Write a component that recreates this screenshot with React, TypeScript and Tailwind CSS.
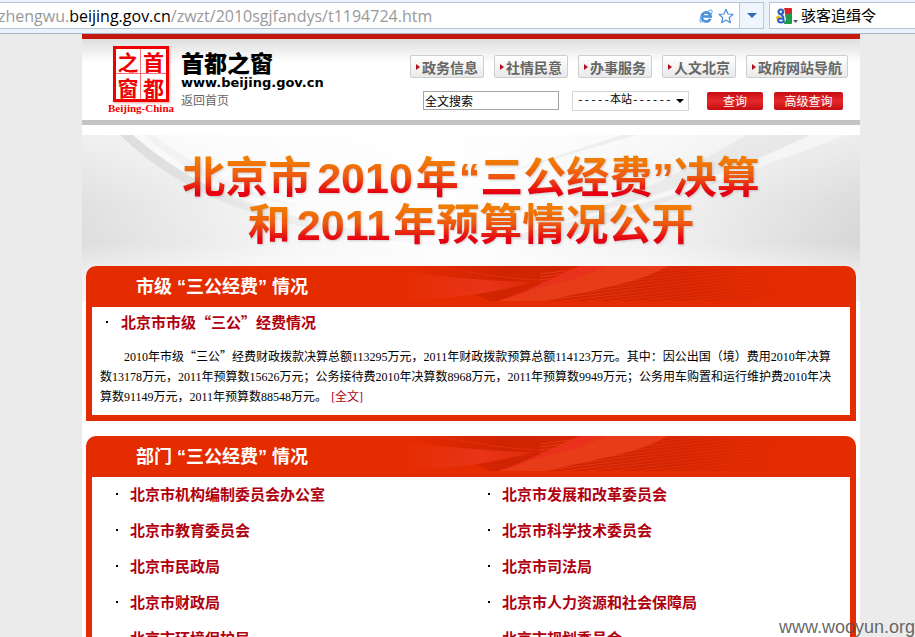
import React from "react";

const SANS = "font-['Liberation_Sans','Noto_Sans_CJK_SC',sans-serif]";
const CJK = "font-['Noto_Sans_CJK_SC',sans-serif]";
const BODY = "font-['Liberation_Serif','Noto_Sans_CJK_SC',serif]";

const navItems = ["政务信息", "社情民意", "办事服务", "人文北京", "政府网站导航"];

const departments = [
  "北京市机构编制委员会办公室",
  "北京市发展和改革委员会",
  "北京市教育委员会",
  "北京市科学技术委员会",
  "北京市民政局",
  "北京市司法局",
  "北京市财政局",
  "北京市人力资源和社会保障局",
  "北京市环境保护局",
  "北京市规划委员会",
];

function BrowserIcon() {
  return (
    <svg width="14" height="14" viewBox="0 0 16 16" fill="none" aria-hidden="true">
      <path d="M13 11.200A5.200 5.200 0 1 1 13.400 8.600H4.200" stroke="#4a8fdc" strokeWidth="3" />
      <path d="M10.400 2.200C13 .6 15.300.7 15 3.200c-.1 1-.7 2.100-1.300 3M3 8.500C.8 11.800.4 14.600 2.200 14.900c1 .1 2.400-.5 3.600-1.300" stroke="#6fabeb" strokeWidth="1.300" />
    </svg>
  );
}

function StarIcon() {
  return (
    <svg width="16" height="16" viewBox="0 0 16 16" aria-hidden="true">
      <path d="M8 1.300l2 4.700 5 .4-3.800 3.300 1.200 5L8 12l-4.400 2.700 1.200-5L1 6.400 6 6z" fill="#fff" stroke="#4a8fdc" strokeWidth="1.200" strokeLinejoin="round" />
    </svg>
  );
}

function SearchEngineIcon() {
  return (
    <svg width="16" height="16" viewBox="0 0 16 16" aria-hidden="true">
      <path d="M8 0h7a1 1 0 0 1 1 1v5L9 7z" fill="#d8232a" />
      <path d="M8 7l8-2v10a1 1 0 0 1-1 1H8z" fill="#1f9a48" />
      <path d="M1 0h7l1 7 1 5-3 4H2l-2-3 3-4-3-4z" fill="#fff" />
      <path d="M0 9l3-2 2 3-4 3z" fill="#f4b400" />
      <circle cx="4.800" cy="3.800" r="2.300" fill="#fff" stroke="#2a5fc4" strokeWidth="2.200" />
      <path d="M5 7c2.400 1.200 2.800 2 2.200 3.400" stroke="#2a5fc4" strokeWidth="2" fill="none" />
      <ellipse cx="5" cy="12.600" rx="2.800" ry="2" fill="#fff" stroke="#2a5fc4" strokeWidth="2" />
    </svg>
  );
}

function BrowserBar() {
  return (
    <div className="flex h-[34px] shrink-0 items-start border-b border-[#a9b4c0] bg-[#eaf2fb] pt-[2px]">
      <div className="flex h-[27px] min-w-0 flex-1 items-center border-y border-[#b6c4d3] bg-white">
        <div className="-ml-0.5 min-w-0 flex-1 overflow-hidden whitespace-nowrap font-['Open_Sans',sans-serif] text-[16px] leading-[24px] text-[#999]">
          zhengwu.<span className="text-black">beijing.gov.cn</span>/zwzt/2010sgjfandys/t1194724.htm
        </div>
        <button type="button" aria-label="兼容模式" className="mr-[5px]"><BrowserIcon /></button>
        <button type="button" aria-label="收藏" className="mr-[5px]"><StarIcon /></button>
        <button type="button" aria-label="展开" className="flex h-full w-[25px] items-center justify-center border-x border-[#b6cbe2] bg-[#eef5fc]">
          <svg width="10" height="5" viewBox="0 0 10 5" aria-hidden="true"><path d="M0 0h10L5 5z" fill="#2d6ab8" /></svg>
        </button>
      </div>
      <div className="ml-[5px] flex h-[27px] w-[146px] items-center border border-r-0 border-[#b6c4d3] bg-white pl-[6px]">
        <SearchEngineIcon />
        <svg className="ml-px mt-3" width="5" height="3" viewBox="0 0 5 3" aria-hidden="true"><path d="M0 0h5L2.500 3z" fill="#555" /></svg>
        <input aria-label="搜索" defaultValue="骇客追缉令" className={`ml-[3px] min-w-0 flex-1 bg-transparent text-[15px] text-black outline-none ${CJK}`} />
      </div>
    </div>
  );
}

function Seal() {
  return (
    <div className="flex w-[64px] shrink-0 flex-col items-center text-[#f00000]">
      <div className={`grid size-[56px] grid-cols-2 grid-rows-2 border-[3px] border-[#f00000] bg-white text-[21px] font-bold leading-[24px] shadow-[1px_1px_2px_#f0a0a0] ${CJK}`}>
        <span className="flex items-center justify-center border-b border-r border-[#f57070]">之</span>
        <span className="flex items-center justify-center border-b border-[#f57070]">首</span>
        <span className="flex items-center justify-center border-r border-[#f57070]">窗</span>
        <span className="flex items-center justify-center">都</span>
      </div>
      <span className="whitespace-nowrap font-['Liberation_Serif',serif] text-[11px] font-bold leading-[13px]">Beijing-China</span>
    </div>
  );
}

function SiteHeader() {
  return (
    <header className="flex h-[91px] items-start border-b-[5px] border-t-[5px] border-b-[#c4c4c4] border-t-[#c4180a] bg-[linear-gradient(#dedede,#fff_24px)] pl-[27px] pr-3">
      <div className="flex gap-2 pt-[7px]">
        <Seal />
        <div className="flex flex-col pt-1 text-black">
          <span className={`h-[26px] text-[23px] font-black leading-[24px] ${CJK}`}>首都之窗</span>
          <span className="font-['DejaVu_Sans',sans-serif] text-[13px] font-bold leading-[14px]">www.beijing.gov.cn</span>
          <a href="#home" className={`text-[12px] leading-[20px] text-[#666] ${CJK}`}>返回首页</a>
        </div>
      </div>
      <div className="ml-auto flex shrink-0 flex-col items-end pt-4">
        <nav className="flex gap-[10px]">
          {navItems.map((item) => (
            <a key={item} href="#nav" className={`flex h-[23px] items-center gap-[2px] whitespace-nowrap rounded-[2px] border border-[#cfcfcf] bg-[linear-gradient(#fff,#e9e9e9)] px-[5px] text-[14px] font-bold leading-[20px] text-[#666] ${CJK}`}>
              <svg width="4" height="6" viewBox="0 0 4 6" aria-hidden="true"><path d="M0 0l4 3-4 3z" fill="#b01020" /></svg>
              {item}
            </a>
          ))}
        </nav>
        <form className={`mr-[5px] mt-3 flex h-[21px] items-center text-[12px] ${CJK}`} onSubmit={(e) => e.preventDefault()}>
          <input aria-label="全文搜索" defaultValue="全文搜索" className="h-[19px] w-[136px] border border-[#a5a5a5] bg-white px-px text-black" />
          <div className="relative ml-[13px]">
            <select aria-label="搜索范围" className="block h-5 w-[117px] appearance-none border border-[#d5d5d5] bg-white pl-1 font-['Liberation_Mono','Noto_Sans_CJK_SC',monospace] text-[11px] text-black">
              <option>-----本站------</option>
            </select>
            <svg className="pointer-events-none absolute right-[5px] top-2" width="8" height="4" viewBox="0 0 8 4" aria-hidden="true"><path d="M0 0h8L4 4z" fill="#000" /></svg>
          </div>
          <button type="submit" className="ml-[18px] h-[18px] w-[56px] rounded-[2px] bg-[linear-gradient(#c60c10,#e32a2a_50%,#c60c10)] leading-[18px] text-white">查询</button>
          <button type="button" className="ml-[11px] h-[18px] w-[69px] rounded-[2px] bg-[linear-gradient(#c60c10,#e32a2a_50%,#c60c10)] leading-[18px] text-white">高级查询</button>
        </form>
      </div>
    </header>
  );
}

function BannerBackdrop() {
  return (
    <svg className="absolute inset-0 h-full w-full" viewBox="0 0 778 166" preserveAspectRatio="none" aria-hidden="true">
      <defs>
        <linearGradient id="side" x1="0" x2="1" y1="0" y2="0">
          <stop offset="0" stopColor="#dadada" />
          <stop offset=".28" stopColor="#f6f6f6" />
          <stop offset=".5" stopColor="#fdfdfd" />
          <stop offset=".74" stopColor="#f0f0f0" />
          <stop offset="1" stopColor="#d3d3d3" />
        </linearGradient>
        <linearGradient id="veil" x1="0" x2="0" y1="0" y2="1">
          <stop offset="0" stopColor="#fff" stopOpacity=".6" />
          <stop offset=".4" stopColor="#fff" stopOpacity=".2" />
          <stop offset=".65" stopColor="#fff" stopOpacity=".1" />
          <stop offset=".85" stopColor="#fff" stopOpacity=".6" />
          <stop offset="1" stopColor="#fff" stopOpacity=".7" />
        </linearGradient>
        <linearGradient id="fade" x1="0" x2="1" y1="0" y2="0">
          <stop offset="0" stopColor="#cfcfcf" stopOpacity=".6" />
          <stop offset="1" stopColor="#eee" stopOpacity=".2" />
        </linearGradient>
      </defs>
      <path d="M0 0h778v166H0z" fill="url(#side)" />
      <path d="M0 0h778v166H0z" fill="url(#veil)" />
      <path d="M50 0h330v120C210 100 120 60 50 0z" fill="#fff" opacity=".55" />
      <path d="M38 0h13c60 52 130 88 340 112C220 106 110 70 38 0z" fill="url(#fade)" />
      <path d="M62 0h10c50 38 90 58 150 72C150 62 105 38 62 0z" fill="#ececec" opacity=".5" />
      <path d="M664 0h100L480 105h-60C520 75 600 40 664 0z" fill="#d0d0d0" opacity=".25" />
      <path d="M728 0h36C660 40 570 70 430 100 560 66 650 38 728 0z" fill="#fff" opacity=".6" />
      <path d="M540 0h14L400 45z" fill="#e4e4e4" opacity=".5" />
    </svg>
  );
}

function BannerLine({ children }: { children: React.ReactNode }) {
  return (
    <span className="flex whitespace-nowrap bg-[linear-gradient(#f27c00_12%,#ee5a10_45%,#e60012_80%)] bg-clip-text text-transparent">
      {children}
    </span>
  );
}

const streaks = Array.from({ length: 20 }, (_, i) => i);

function HeaderSwoosh() {
  return (
    <svg className="absolute right-0 top-0 h-[35px] w-[476px]" viewBox="0 0 476 35" aria-hidden="true">
      <defs>
        <linearGradient id="dark" x1="0" x2="1" y1="0" y2="0">
          <stop offset="0" stopColor="#d02400" stopOpacity="0" />
          <stop offset=".2" stopColor="#d02400" />
          <stop offset=".6" stopColor="#d42400" />
          <stop offset=".95" stopColor="#e52b00" stopOpacity="0" />
        </linearGradient>
        <linearGradient id="glow" x1="0" x2="1" y1="0" y2="0">
          <stop offset="0" stopColor="#e83a18" stopOpacity="0" />
          <stop offset=".6" stopColor="#ea3418" />
          <stop offset="1" stopColor="#dc2a08" />
        </linearGradient>
        <linearGradient id="line" gradientUnits="userSpaceOnUse" x1="180" x2="440" y1="0" y2="0">
          <stop offset="0" stopColor="#ec4020" stopOpacity=".7" />
          <stop offset="1" stopColor="#ec4020" stopOpacity="0" />
        </linearGradient>
      </defs>
      <path d="M30 0h446v35H110z" fill="url(#dark)" />
      <path d="M20 6C80 12 120 16 155 16 110 28 70 33 20 35z" fill="url(#glow)" />
      <path d="M60 1c40 7 75 13 105 13" stroke="#e03010" fill="none" />
      {streaks.map((i) => (
        <path key={i} d={`M160 ${8 + i * 3}C240 ${-2 + i * 3} 330 ${-14 + i * 3} 450 ${-22 + i * 3}`} stroke="url(#line)" fill="none" strokeWidth="1" />
      ))}
      <path d="M200 0h88C265 13 240 18 215 24l-50 11h-47C155 24 178 8 200 0z" fill="#e83c18" />
      <path d="M200 0h26C200 12 185 16 165 20 150 25 135 31 118 35 155 22 180 8 200 0z" fill="#ea2c1c" opacity=".7" />
    </svg>
  );
}

function Panel({ title, children }: { title: string; children: React.ReactNode }) {
  return (
    <section className="relative mx-1">
      <div className="relative flex h-[41px] items-center overflow-hidden rounded-t-[10px] bg-[#e52b00] pl-[50px]">
        <HeaderSwoosh />
        <h2 className={`relative text-[18px] font-bold leading-[24px] text-white ${SANS}`}>{title}</h2>
      </div>
      <div className="border-x-[6px] border-b-[6px] border-[#e42c00] bg-white">{children}</div>
    </section>
  );
}

function Bullet() {
  return <span aria-hidden="true" className="size-[2px] shrink-0 bg-black" />;
}

export default function App() {
  return (
    <div className="relative flex h-screen flex-col overflow-hidden bg-[#ebebeb]">
      <BrowserBar />
      <div className="ml-[82px] w-full max-w-[778px] flex-1 bg-white">
        <SiteHeader />
        <main className="pt-[10px]">
          <div className="relative -mb-[35px] h-[166px]">
            <BannerBackdrop />
            <h1 className={`relative flex flex-col items-center pt-5 text-[43px] font-bold leading-[47px] drop-shadow-[1px_1px_1px_rgba(120,120,120,0.35)] ${SANS}`}>
              <BannerLine>北京市<span className="ml-[6px] mr-[3px]">2010</span>年“三公经费”决算</BannerLine>
              <BannerLine>和<span className="ml-[6px] mr-[3px]">2011</span>年预算情况公开</BannerLine>
            </h1>
          </div>

          <Panel title="市级 “三公经费” 情况">
            <div className="h-[108px] pl-2 pr-3">
              <h3 className="flex h-[30px] items-center gap-[13px] pl-[6px]">
                <Bullet />
                <a href="#city" className={`text-[15px] font-bold leading-[20px] text-[#b0000f] ${CJK}`}>北京市市级“三公”经费情况</a>
              </h3>
              <p className={`mt-[9px] indent-[24px] text-[12px] leading-[20px] text-black ${BODY}`}>
                2010年市级<span className={CJK}>“三公”</span>经费财政拨款决算总额113295万元，2011年财政拨款预算总额114123万元。其中：因公出国（境）费用2010年决算数13178万元，2011年预算数15626万元；公务接待费2010年决算数8968万元，2011年预算数9949万元；公务用车购置和运行维护费2010年决算数91149万元，2011年预算数88548万元。
                <a href="#full" className="ml-1 text-[#b0000f]">[全文]</a>
              </p>
            </div>
          </Panel>

          <div className="mt-[15px]">
            <Panel title="部门 “三公经费” 情况">
              <ul className="grid grid-cols-2 pl-[10px] pr-1">
                {departments.map((name) => (
                  <li key={name} className="flex h-9 items-center gap-[12px] pb-0.5 pl-[14px]">
                    <Bullet />
                    <a href="#dept" className={`text-[15px] font-bold leading-[20px] text-[#b0000f] ${CJK}`}>{name}</a>
                  </li>
                ))}
              </ul>
            </Panel>
          </div>
        </main>
      </div>
      <div className="absolute bottom-0 right-0 font-['Liberation_Sans',sans-serif] text-[18px] leading-[20px] text-[#555]/90">www.wooyun.org</div>
    </div>
  );
}
